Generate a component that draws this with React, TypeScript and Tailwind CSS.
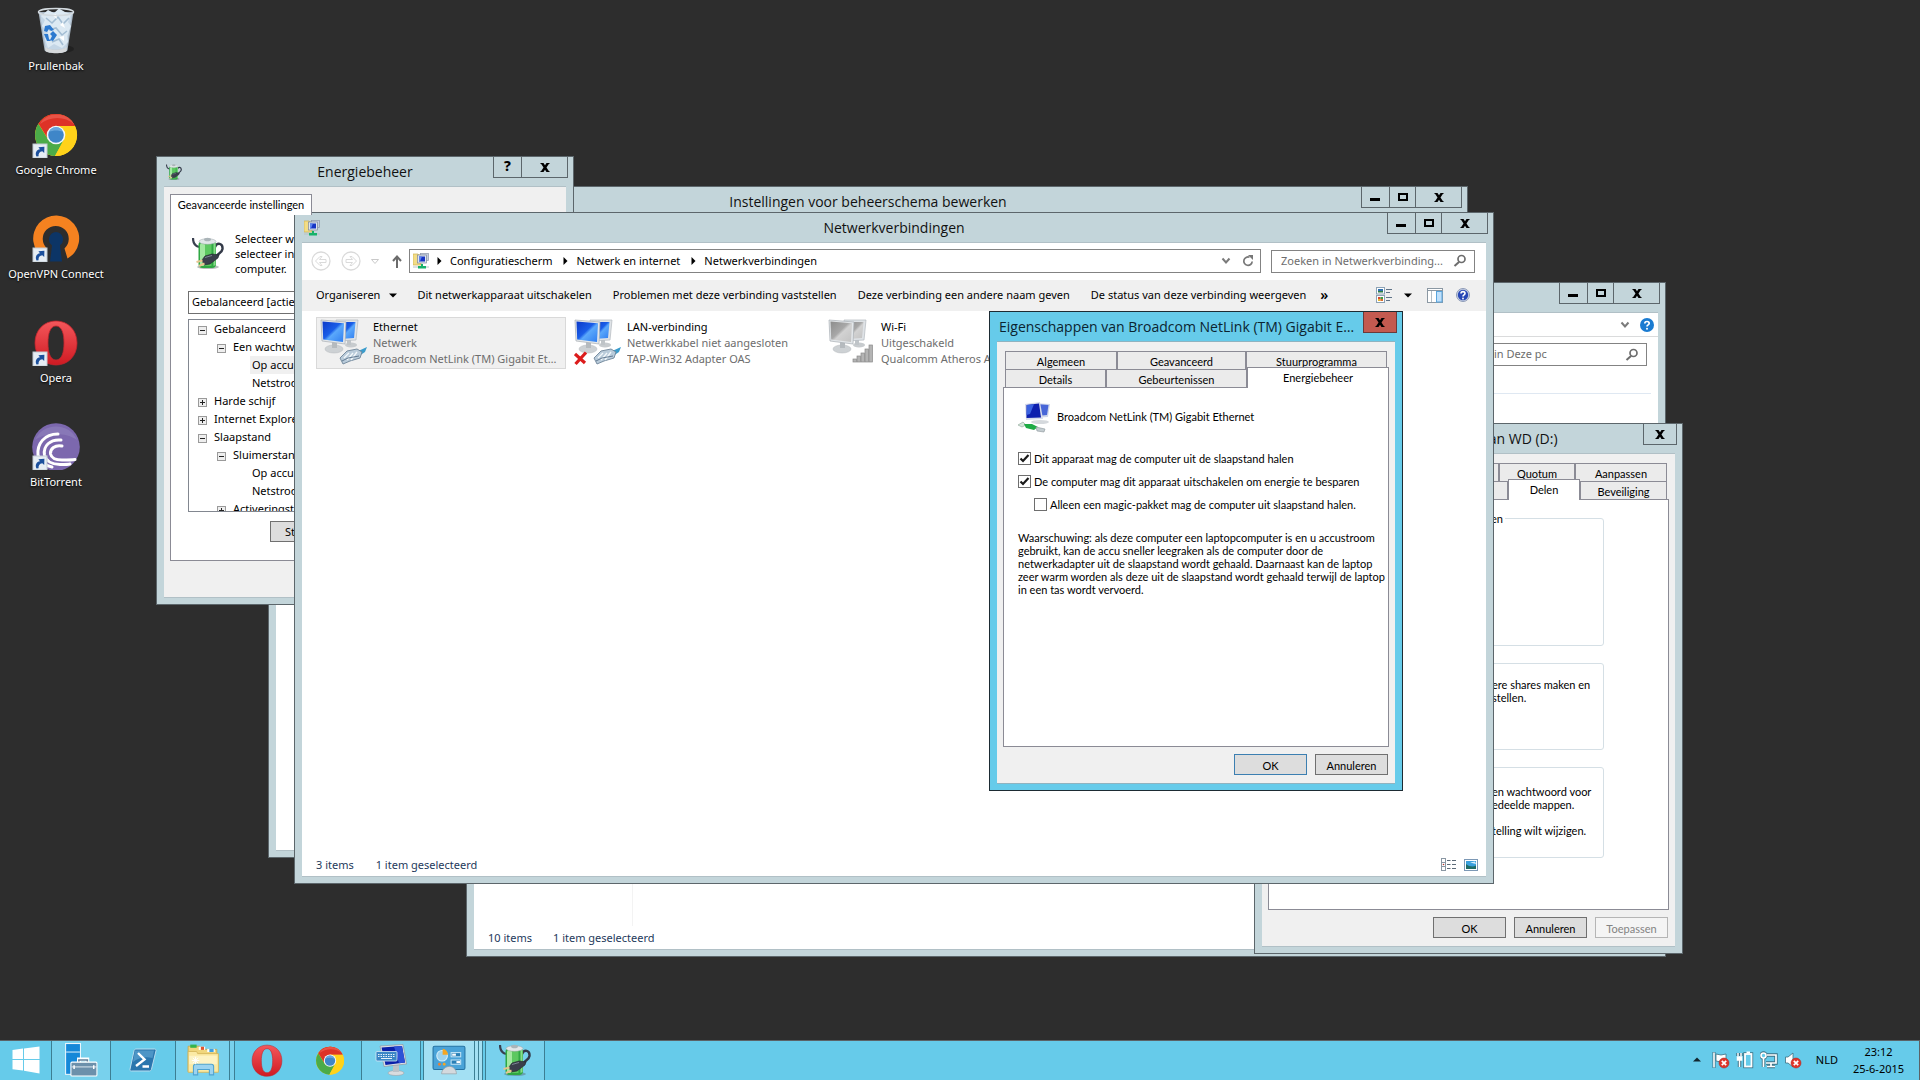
import React from "react";

const UI = "font-['Noto_Sans','Open_Sans',sans-serif]";
const TITLE = "font-['Open_Sans','Noto_Sans',sans-serif]";
const SANS = "font-['Lato','Liberation_Sans',sans-serif]";

/* ---------- icons ---------- */

function ShortcutMark() {
  return (
    <g>
      <rect x="1" y="34" width="14" height="14" fill="#e6edf4" stroke="#c3ccd4" strokeWidth="1" />
      <path d="M4.5 46.5C2.8 43 4.5 39.8 8 39.3L6.4 37.2L12.4 36.8L12.2 43L10.3 41.3C7.4 41.8 6.2 43.6 6.6 46.3Z" fill="#1b4f9c" />
    </g>
  );
}

function RecycleBin() {
  return (
    <svg width="48" height="48" viewBox="0 0 48 48" aria-hidden="true">
      <ellipse cx="30" cy="43" rx="12" ry="4" fill="#1d1d1d" opacity="0.7" />
      <path d="M6.500 6L12.500 44C13 48 35 48 35.500 44L41.500 6Z" fill="#a9b7c4" />
      <path d="M8 8L13.500 41.500C16 44.500 32 44.500 34.500 41.500L40 8Z" fill="#c4d6e6" />
      <path d="M9 10L16 4L22 7L27 2.500L33 6L39 8L36 16L39 20L35 30L36 36L30 42L22 38L16 42L13 33L16 26L10 20L13 14Z" fill="#dce9f3" />
      <path d="M14 12L20 17L26 11L31 18L37 12M17 24L24 22L30 29L35 25M20 36L27 33L31 39" fill="none" stroke="#a3bdd3" strokeWidth="1.600" />
      <path d="M20 9L25 13L24 8ZM28 19L33 22L31 16ZM27 31L32 35L32 30Z" fill="#fff" />
      <path d="M13 20L18 19L22 24L19 25L17 23L15 26L12 25ZM21 25L25 29L21 35L18 34L20 30L18 28ZM12 28L16 28L17 33L19 35L15 35Z" fill="#2c79cf" />
      <ellipse cx="24" cy="6" rx="17.500" ry="3.500" fill="none" stroke="#d3dadf" strokeWidth="1.500" />
      <path d="M13 41C18 44.500 30 44.500 35 41L34.500 45C32 48 16 48 13.500 45Z" fill="#d6d9db" />
    </svg>
  );
}

function ChromeArt() {
  return (
    <g>
      <circle cx="24" cy="25" r="21" fill="#ffd21a" />
      <path d="M24 25L6.500 13.500A21 21 0 0 1 43 15.900L24 15.900Z" fill="#dd3327" />
      <path d="M6.400 13.700A21 21 0 0 0 23 46L32 29.500L24 25L16.100 29.500Z" fill="#4bab48" />
      <path d="M24 15.900H43A21 21 0 0 1 23 46L32 29.500Z" fill="#ffd21a" />
      <path d="M6.500 13.700A21 21 0 0 1 43 15.900H24L15.500 28Z" fill="#dd3327" />
      <path d="M8 14C14 2 34 1 42 14C33 6 18 6 8 14Z" fill="#f0695b" opacity="0.600" />
      <circle cx="24" cy="25" r="9.300" fill="#f4f8fb" />
      <circle cx="24" cy="25" r="7.800" fill="#3f86c8" />
      <path d="M17 22A7.500 7.500 0 0 1 31 22C27 20 21 20 17 22Z" fill="#6aa6dc" />
    </g>
  );
}

function OperaArt({ size, mark }: { size: number; mark?: boolean }) {
  return (
    <svg width={size} height={size} viewBox="0 0 48 48" aria-hidden="true">
      <defs>
        <linearGradient id="operaRed" x1="0" y1="0" x2="0" y2="1">
          <stop offset="0" stopColor="#f4575b" />
          <stop offset="1" stopColor="#cf1a22" />
        </linearGradient>
      </defs>
      <path d="M24 3C36 3 45 12 45 25S36 47 24 47S3 38 3 25S12 3 24 3ZM24 8C18 8 16 16 16 25S18 42 24 42S32 34 32 25S30 8 24 8Z" fill="url(#operaRed)" fillRule="evenodd" stroke="#c0252c" strokeWidth="0.800" />
      {mark && <ShortcutMark />}
    </svg>
  );
}

function ChromeIcon({ size, mark }: { size: number; mark?: boolean }) {
  return (
    <svg width={size} height={size} viewBox="0 0 48 48" aria-hidden="true">
      <ChromeArt />
      {mark && <ShortcutMark />}
    </svg>
  );
}

function OpenVpnIcon() {
  return (
    <svg width="48" height="48" viewBox="0 0 48 48" aria-hidden="true">
      <path d="M12 44A23 23 0 1 1 35.500 44.500L32.500 34.500A13 13 0 1 0 15 34.500Z" fill="#f58220" />
      <path d="M24 18A7.500 7.500 0 0 1 28 31.500L30 47.500H18L20 31.500A7.500 7.500 0 0 1 24 18Z" fill="#0c3566" />
      <ShortcutMark />
    </svg>
  );
}

function BitTorrentIcon() {
  return (
    <svg width="48" height="48" viewBox="0 0 48 48" aria-hidden="true">
      <circle cx="24" cy="25" r="23.800" fill="#7c68ae" />
      <path d="M3 18A23 23 0 0 1 45 18C34 10 14 10 3 18Z" fill="#9183bd" opacity="0.600" />
      <g fill="none" stroke="#fff" strokeWidth="3" strokeLinecap="round">
        <path d="M26 12C12 12 5 22 6 33C8 40 14 44 20 45" />
        <path d="M29 18C18 17 11 24 12.500 33C14 39 20 42.500 28 42.500C32 42.500 36 42.500 38 42" />
        <path d="M30 24C23 22.500 18 27 18.500 32C19.500 36 24 38 30 38C36 38 40 38 43 37.500" />
      </g>
      <ShortcutMark />
    </svg>
  );
}

function PowerIcon({ size }: { size: number }) {
  return (
    <svg width={size} height={size} viewBox="0 0 32 32" aria-hidden="true">
      <ellipse cx="16" cy="30" rx="11" ry="2" fill="#4f5a5a" opacity="0.400" />
      <path d="M1 1C1 5 3 9 7 10" fill="none" stroke="#39404f" strokeWidth="2.200" />
      <path d="M23 10C25 5 31 6 30.500 12C30 16 26 16 24 20" fill="none" stroke="#333a48" strokeWidth="2.400" />
      <rect x="6.500" y="4" width="17.500" height="27" rx="4" fill="#2fa843" />
      <rect x="8" y="6" width="5" height="23" rx="2" fill="#a2e8a0" />
      <path d="M13 6H19.500V29H13Z" fill="#5cc860" />
      <path d="M21.500 6H23.500V28L21.500 29Z" fill="#8adb8a" />
      <ellipse cx="15.500" cy="4.500" rx="8.500" ry="2.800" fill="#e1e6e8" stroke="#9aa5a9" strokeWidth="0.500" />
      <ellipse cx="15.500" cy="2.500" rx="3.500" ry="1.800" fill="#aab4b8" />
      <path d="M10 23L13 19L20 17L27 18L26 21L18 27L12 28Z" fill="#3a3f4b" stroke="#20242d" strokeWidth="0.600" />
      <path d="M13 20.500L20 18.500" stroke="#7d8494" strokeWidth="1" />
      <path d="M4.500 25L10.500 23.500M7 29L12.500 26.500" stroke="#e6c48f" strokeWidth="2" />
    </svg>
  );
}

function NetFolderIcon() {
  return (
    <svg width="16" height="16" viewBox="0 0 16 16" aria-hidden="true">
      <path d="M0 1H5L6 2H8V12H0Z" fill="#f3dd86" stroke="#cdb252" strokeWidth="0.700" />
      <rect x="7.500" y="0.500" width="8" height="7" fill="#c6cfdd" stroke="#8e98aa" strokeWidth="0.700" />
      <rect x="4.500" y="2" width="9" height="8" fill="#dfe5ee" stroke="#7c879b" strokeWidth="0.700" />
      <rect x="6" y="3.500" width="6" height="5" fill="#1734c4" />
      <path d="M6 3.500H9L7 8.500H6Z" fill="#5d84ee" />
      <path d="M8 11H10V13H13V15.500H5V13H8Z" fill="#17b26a" />
      <path d="M0 14H5M13 14H16" stroke="#b8c2c5" />
    </svg>
  );
}

type MonitorKind = "cable" | "off" | "wifi";

function ConnectionIcon({ kind }: { kind: MonitorKind }) {
  const grey = kind === "wifi";
  const a = grey ? "#8c8c8c" : "#0c39c8";
  const b = grey ? "#d2d2d2" : "#5aa8fb";
  const id = "scr" + kind;
  return (
    <svg width="50" height="50" viewBox="0 0 50 50" aria-hidden="true">
      <defs>
        <linearGradient id={id} x1="0" y1="0" x2="1" y2="1">
          <stop offset="0" stopColor={a} />
          <stop offset="0.450" stopColor={grey ? "#a8a8a8" : "#1a5ee8"} />
          <stop offset="0.550" stopColor={b} />
          <stop offset="1" stopColor={grey ? "#c2c2c2" : "#2f7df0"} />
        </linearGradient>
      </defs>
      <ellipse cx="31" cy="27" rx="6" ry="2.500" fill="#c7cbce" />
      <path d="M27 20H31V27H27Z" fill="#bfc4c8" />
      <path d="M16 2L38 2L36 22L18 23Z" fill="#dfe3e7" stroke="#b3b9bf" strokeWidth="0.700" />
      <path d="M19 4L35.500 4L34 20L20 21Z" fill={`url(#${id})`} />
      <ellipse cx="14" cy="31" rx="9" ry="4" fill="#cdd1d4" stroke="#b2b7ba" strokeWidth="0.500" />
      <path d="M12 24H17V30H12Z" fill="#b5babe" />
      <path d="M1 2L26 4L25 26L2 23Z" fill="#e3e7ea" stroke="#a9afb5" strokeWidth="0.700" />
      <path d="M2.500 3.500L24 5.300L23 24L3.200 21.500Z" fill={`url(#${id})`} />
      {grey ? (
        <g fill="#b4b4b4" stroke="#8a8a8a" strokeWidth="0.700">
          <rect x="25" y="41" width="3.500" height="3" />
          <rect x="29" y="38" width="3.500" height="6" />
          <rect x="33" y="35" width="3.500" height="9" />
          <rect x="37" y="31" width="3.500" height="13" />
          <rect x="41" y="27" width="3.500" height="17" />
        </g>
      ) : (
        <g>
          <path d="M36 34L47 29L45 34L39 38Z" fill="#3a9ccc" />
          <path d="M20 40L27 33L37 31L42 34L40 40L30 43L23 46Z" fill="#b9cbda" stroke="#6e8498" strokeWidth="0.900" />
          <path d="M24 40L29 35M27 42L33 35M31 42L37 34" stroke="#f2f7fa" strokeWidth="1.400" />
          <path d="M22 43L28 40L39 38" stroke="#587089" fill="none" strokeWidth="0.900" />
        </g>
      )}
      {kind === "off" && <path d="M1 36L11 45M12 34.500L1.500 46" stroke="#dc1c1c" strokeWidth="3.200" />}
    </svg>
  );
}

function AdapterIcon() {
  return (
    <svg width="32" height="32" viewBox="0 0 32 32" aria-hidden="true">
      <path d="M15 1L32 2L30 15L16 16Z" fill="#cfd6ea" />
      <path d="M18 2L30.500 3L29 13L19 14Z" fill="#4866d8" />
      <path d="M7 2L22 0L25 17L8 18Z" fill="#d6dbea" />
      <path d="M8.500 3L21 1.500L23 15.500L8.500 16Z" fill="#0d1fae" />
      <path d="M9 3L16 2.200L12 12L8.500 13Z" fill="#3a62e0" />
      <ellipse cx="22" cy="20" rx="9" ry="2" fill="#d5d9dd" />
      <path d="M0 23L5 20L8 23L4 25Z" fill="#d4e6da" stroke="#8ba596" strokeWidth="0.600" />
      <path d="M6 22L14 22L20 25L16 28L8 26Z" fill="#1eab45" />
      <path d="M18 25L27 27L26 30L19 29Z" fill="#c3ccd0" stroke="#8b959a" strokeWidth="0.600" />
    </svg>
  );
}

function Magnifier() {
  return (
    <svg width="14" height="14" viewBox="0 0 14 14" fill="none" stroke="#6d6d6d" aria-hidden="true">
      <circle cx="8.500" cy="5" r="3.500" strokeWidth="1.700" />
      <path d="M6 8L1.500 12" strokeWidth="2" />
    </svg>
  );
}

function Chevron() {
  return (
    <svg width="10" height="8" viewBox="0 0 10 8" fill="none" stroke="#7b7b7b" strokeWidth="2" aria-hidden="true">
      <path d="M1.500 1.500L5 5.500L8.500 1.500" />
    </svg>
  );
}

function TriRight() {
  return (
    <svg width="5" height="8" viewBox="0 0 5 8" aria-hidden="true">
      <path d="M0.500 0L4.500 4L0.500 8Z" fill="#000" />
    </svg>
  );
}

function TriDown() {
  return (
    <svg width="8" height="5" viewBox="0 0 8 5" aria-hidden="true">
      <path d="M0 0.500H8L4 4.500Z" fill="#000" />
    </svg>
  );
}

function HistoryArrow({ back }: { back?: boolean }) {
  return (
    <svg width="20" height="20" viewBox="0 0 20 20" fill="none" stroke="#dadada" aria-hidden="true">
      <circle cx="10" cy="10" r="9" strokeWidth="1.300" />
      {back ? (
        <path d="M4.500 10L9 5.500H11L8.500 8.500H15V11.500H8.500L11 14.500H9Z" />
      ) : (
        <path d="M15.500 10L11 5.500H9L11.500 8.500H5V11.500H11.500L9 14.500H11Z" />
      )}
    </svg>
  );
}

/* ---------- window frame ---------- */

function CloseX() {
  return (
    <svg width="10" height="9" viewBox="0 0 10 9" aria-hidden="true">
      <path d="M0.500 0H3.500L5 2.300L6.500 0H9.500V1H8.800L6.500 4.500L8.800 8H9.500V9H6.500L5 6.700L3.500 9H0.500V8H1.200L3.500 4.500L1.200 1H0.500Z" fill="#000" />
    </svg>
  );
}

type Caption = "full" | "help" | "close";

function CaptionButtons({ kind, active }: { kind: Caption; active?: boolean }) {
  return (
    <div className={"flex h-[21px] shrink-0 self-start border-x border-b " + (active ? "border-[#6b3a3a]" : "border-[#5c666b]")}>
      {kind === "full" && (
        <>
          <button aria-label="Minimaliseren" className="flex w-[27px] items-end justify-center pr-px pb-[6px]">
            <svg width="10" height="3" aria-hidden="true"><rect width="10" height="3" fill="#000" /></svg>
          </button>
          <button aria-label="Maximaliseren" className="flex w-[27px] items-center justify-center border-x border-[#5c666b]">
            <svg width="10" height="8" aria-hidden="true"><rect x="1" y="1" width="8" height="6" fill="none" stroke="#000" strokeWidth="2" /></svg>
          </button>
        </>
      )}
      {kind === "help" && (
        <button aria-label="Help" className="w-[28px] border-r border-[#5c666b] pb-[2px] text-[14px] leading-[18px] font-extrabold">?</button>
      )}
      <button
        aria-label="Sluiten"
        className={"flex items-center justify-center " + (kind === "close" ? "w-[32px] " : "w-[45px] ") + (active ? "bg-[#c35a50]" : "")}
      >
        <CloseX />
      </button>
    </div>
  );
}

type WindowProps = {
  place: string;
  title: string;
  caption: Caption;
  icon?: React.ReactNode;
  active?: boolean;
  dialog?: boolean;
  children?: React.ReactNode;
};

function Window({ place, title, caption, icon, active, dialog, children }: WindowProps) {
  return (
    <section
      aria-label={title}
      className={"absolute flex flex-col border " + place + " " + (active ? "border-[#1d2b33] bg-[#66cbea]" : "border-[#5c666b] bg-[#c3d5da]")}
    >
      {active ? (
        <header className="flex h-[29px] shrink-0 items-center pr-[5px] pl-[9px]">
          <h2 className={"min-w-0 flex-1 truncate pr-1 text-[14px] leading-5 text-[#0b2430] " + TITLE}>{title}</h2>
          <CaptionButtons kind={caption} active />
        </header>
      ) : (
        <header className="grid h-[29px] shrink-0 grid-cols-[1fr_auto_1fr] items-center px-[5px]">
          <div className="pl-1">{icon}</div>
          <h2 className={"text-[14px] leading-5 whitespace-nowrap text-[#111] " + TITLE}>{title}</h2>
          <div className="flex justify-end self-start">
            <CaptionButtons kind={caption} />
          </div>
        </header>
      )}
      <div
        className={
          "mx-[7px] mb-[6px] flex min-h-0 flex-1 flex-col border-y " +
          (active ? "border-[#8fb3c0] " : "border-[#b1c0c6] ") +
          (dialog ? "bg-[#f0f0f0]" : "bg-white")
        }
      >
        {children}
      </div>
    </section>
  );
}

/* ---------- shared controls ---------- */

function PushButton({ children, look = "plain" }: { children: React.ReactNode; look?: "plain" | "default" | "disabled" }) {
  const tone =
    look === "default"
      ? "border-[#3c7fb1] bg-[#dddddd] text-black"
      : look === "disabled"
        ? "border-[#b5b5b5] bg-[#f4f4f4] text-[#838383]"
        : "border-[#707070] bg-[#dddddd] text-black";
  return (
    <button disabled={look === "disabled"} className={"h-[21px] w-[73px] border pt-px text-[11px] leading-[13px] " + SANS + " " + tone}>
      {children}
    </button>
  );
}

function Tab({ children, width, active }: { children?: React.ReactNode; width: string; active?: boolean }) {
  return (
    <button
      role="tab"
      aria-selected={!!active}
      className={
        "border-x border-t border-[#8b8b95] text-[11px] leading-[13px] whitespace-nowrap " + SANS + " " + width + " " +
        (active ? "relative z-10 -mt-[2px] -mb-px h-[21px] bg-white pb-[2px]" : "h-[18px] bg-[#ebebeb] pt-px")
      }
    >
      {children}
    </button>
  );
}

function Check({ label, checked, indent }: { label: string; checked?: boolean; indent?: boolean }) {
  return (
    <label className={"flex h-[13px] items-center gap-[3px] text-[11px] leading-[13px] whitespace-nowrap " + (indent ? "ml-4" : "")}>
      <span className="grid shrink-0">
        <input type="checkbox" defaultChecked={checked} className="col-start-1 row-start-1 size-[13px] appearance-none border border-[#6e6e6e] bg-white" />
        {checked && (
          <svg width="13" height="13" viewBox="0 0 13 13" className="pointer-events-none col-start-1 row-start-1" aria-hidden="true">
            <path d="M2.500 6.500L5 9L10.500 3" fill="none" stroke="#1a1a1a" strokeWidth="2.200" />
          </svg>
        )}
      </span>
      {label}
    </label>
  );
}

/* ---------- windows ---------- */

type TreeItem = { text: string; depth: 0 | 1 | 2; sign?: "+" | "-"; selected?: boolean };

const tree: TreeItem[] = [
  { text: "Gebalanceerd", depth: 0, sign: "-" },
  { text: "Een wachtwoord", depth: 1, sign: "-" },
  { text: "Op accu", depth: 2, selected: true },
  { text: "Netstroom", depth: 2 },
  { text: "Harde schijf", depth: 0, sign: "+" },
  { text: "Internet Explorer", depth: 0, sign: "+" },
  { text: "Slaapstand", depth: 0, sign: "-" },
  { text: "Sluimerstand", depth: 1, sign: "-" },
  { text: "Op accu", depth: 2 },
  { text: "Netstroom", depth: 2 },
  { text: "Activeringstimers", depth: 1, sign: "+" },
];

const depthPad = ["pl-[9px]", "pl-[28px]", "pl-[61px]"];

function PowerWindow() {
  return (
    <Window place="left-[156px] top-[156px] h-[449px] w-[418px]" title="Energiebeheer" caption="help" dialog icon={<PowerIcon size={16} />}>
      <div className="flex min-h-0 flex-1 flex-col px-[6px] pt-[7px] pb-[36px]">
        <div role="tablist" className="flex">
          <button role="tab" aria-selected="true" className={"relative z-10 -mb-px h-[21px] w-[142px] border-x border-t border-[#8b8b95] bg-white pb-px text-[11px] leading-[13px] " + SANS}>
            Geavanceerde instellingen
          </button>
        </div>
        <div className="flex min-h-0 flex-1 flex-col border border-[#8b8b95] bg-white px-[17px] pt-4 pb-[18px]">
          <div className="flex gap-[11px] pl-[4px]">
            <div className="mt-[6px]"><PowerIcon size={32} /></div>
            <p className="text-[11px] leading-[15px]">
              Selecteer welk schema u wilt<br />selecteer instellingen<br />computer.
            </p>
          </div>
          <select aria-label="Energieschema" className="mt-[15px] h-[23px] w-full shrink-0 appearance-none border border-[#707070] bg-white px-[3px] pb-px text-[11px] leading-5">
            <option>Gebalanceerd [actief]</option>
          </select>
          <ul className="mt-[5px] min-h-0 flex-1 overflow-hidden border border-[#828790]">
            {tree.map((item, i) => (
              <li key={i} className={"flex h-[18px] items-center gap-[7px] text-[11px] leading-[18px] whitespace-nowrap " + depthPad[item.depth]}>
                {item.sign && (
                  <svg width="9" height="9" viewBox="0 0 9 9" className="mt-[3px] shrink-0" aria-hidden="true">
                    <rect x="0.500" y="0.500" width="8" height="8" fill="#eee" stroke="#9a9a9a" />
                    <path d={item.sign === "+" ? "M2 4.500H7M4.500 2V7" : "M2 4.500H7"} stroke="#222" />
                  </svg>
                )}
                <span className={item.selected ? "bg-[#f0f0f0] pr-[2px] pl-[2px]" : item.depth === 2 ? "pl-[2px]" : ""}>{item.text}</span>
              </li>
            ))}
          </ul>
          <button className="mt-[9px] h-[21px] w-[272px] shrink-0 self-end border border-[#707070] bg-[#dddddd] pl-[14px] text-left text-[11px] leading-[18px]">
            Standaardinstellingen
          </button>
        </div>
      </div>
    </Window>
  );
}

const connections: { name: string; state: string; device: string; kind: MonitorKind; selected?: boolean }[] = [
  { name: "Ethernet", state: "Netwerk", device: "Broadcom NetLink (TM) Gigabit Ethernet", kind: "cable", selected: true },
  { name: "LAN-verbinding", state: "Netwerkkabel niet aangesloten", device: "TAP-Win32 Adapter OAS", kind: "off" },
  { name: "Wi-Fi", state: "Uitgeschakeld", device: "Qualcomm Atheros AR5B97", kind: "wifi" },
];

const crumbs = ["Configuratiescherm", "Netwerk en internet", "Netwerkverbindingen"];

const commands = [
  "Dit netwerkapparaat uitschakelen",
  "Problemen met deze verbinding vaststellen",
  "Deze verbinding een andere naam geven",
  "De status van deze verbinding weergeven",
];

function NetworkWindow() {
  return (
    <Window place="left-[294px] top-[212px] h-[672px] w-[1200px]" title="Netwerkverbindingen" caption="full" icon={<NetFolderIcon />}>
      <nav className="flex h-[37px] shrink-0 items-center pr-[11px] pb-px pl-[9px]">
        <button aria-label="Vorige"><HistoryArrow back /></button>
        <button aria-label="Volgende" className="ml-[10px]"><HistoryArrow /></button>
        <button aria-label="Recente locaties" className="ml-[10px]">
          <svg width="8" height="5" viewBox="0 0 8 5" aria-hidden="true"><path d="M0.500 0.500H7.500L4 4.500Z" fill="none" stroke="#c9c9c9" /></svg>
        </button>
        <button aria-label="Omhoog" className="ml-[13px]">
          <svg width="10" height="13" viewBox="0 0 10 13" fill="none" stroke="#6b6b6b" strokeWidth="2" aria-hidden="true"><path d="M5 13V2M1 6L5 1.500L9 6" /></svg>
        </button>
        <div className="ml-[7px] flex h-6 min-w-0 flex-1 items-center border border-[#838383] pr-[6px] pl-[3px]">
          <NetFolderIcon />
          <ol className="ml-[8px] flex items-center gap-[11px]">
            {crumbs.map((c) => (
              <li key={c} className="flex items-center gap-[8px]">
                <TriRight />
                <button className="pb-px text-[11px] leading-4">{c}</button>
              </li>
            ))}
          </ol>
          <span className="flex-1" />
          <button aria-label="Vorige locaties" className="mr-[11px]"><Chevron /></button>
          <button aria-label="Vernieuwen">
            <svg width="12" height="12" viewBox="0 0 12 12" fill="none" aria-hidden="true">
              <path d="M7.500 2.200A4.200 4.200 0 1 0 10.200 6.500" stroke="#777" strokeWidth="1.700" />
              <path d="M6 0H11V5Z" fill="#777" />
            </svg>
          </button>
        </div>
        <label className="ml-[10px] flex h-[23px] w-[204px] items-center border border-[#838383] pr-[7px] pl-[9px]">
          <input type="text" aria-label="Zoeken" placeholder="Zoeken in Netwerkverbinding..." className="min-w-0 flex-1 pb-px text-[11px] leading-4 outline-none placeholder:text-[#6d6d6d]" />
          <Magnifier />
        </label>
      </nav>
      <div role="toolbar" className="flex h-[31px] shrink-0 items-center bg-[#f0f0f0] pr-[16px] pb-px pl-[14px] text-[11px] leading-4 whitespace-nowrap">
        <button className="mr-[20px] flex items-center gap-[9px]">Organiseren <TriDown /></button>
        <div className="flex gap-[21px]">
          {commands.map((c) => (
            <button key={c}>{c}</button>
          ))}
        </div>
        <button aria-label="Meer opdrachten" className="ml-[14px] text-[14px] font-semibold">»</button>
        <span className="flex-1" />
        <button aria-label="Weergave wijzigen">
          <svg width="16" height="16" viewBox="0 0 16 16" aria-hidden="true">
            <rect x="0.500" y="0.500" width="8" height="6.500" fill="#fff" stroke="#8da2b5" />
            <rect x="2" y="2" width="5" height="3" fill="#2c6fae" />
            <rect x="2" y="4" width="5" height="1.500" fill="#2f7d46" />
            <rect x="0.500" y="8.500" width="8" height="7" fill="#fff" stroke="#8da2b5" />
            <path d="M2 10H4.500V12H2Z" fill="#d2462f" /><path d="M4.500 10H7V12H4.500Z" fill="#3d9b43" /><path d="M2 12H4.500V14H2Z" fill="#e7b62e" /><path d="M4.500 12H7V14H4.500Z" fill="#d86b2f" />
            <path d="M10 2.500H16M10 5.500H14M10 10.500H16M10 13.500H14" stroke="#5f7388" />
          </svg>
        </button>
        <button aria-label="Meer weergaven" className="ml-[12px]"><TriDown /></button>
        <button aria-label="Voorbeeldvenster" className="ml-[15px]">
          <svg width="16" height="15" viewBox="0 0 16 15" aria-hidden="true">
            <rect x="0.500" y="0.500" width="15" height="14" fill="#fff" stroke="#8b98a3" />
            <path d="M1 2.500H15" stroke="#8b98a3" />
            <path d="M4.500 3V14" stroke="#b4bec6" />
            <rect x="9.500" y="3.500" width="5.500" height="10.500" fill="#bfe0fb" stroke="#5aa5dd" />
          </svg>
        </button>
        <button aria-label="Help" className="ml-[13px]">
          <svg width="14" height="14" viewBox="0 0 14 14" aria-hidden="true">
            <circle cx="7" cy="7" r="6.500" fill="#c9d2e6" stroke="#8e9bb6" />
            <circle cx="7" cy="7" r="5.200" fill="#2747b5" />
            <path d="M5 5.500C5 3 9 3 9 5.500C9 7 7 6.700 7 8.500" fill="none" stroke="#fff" strokeWidth="1.600" />
            <circle cx="7" cy="10.500" r="0.900" fill="#fff" />
          </svg>
        </button>
      </div>
      <ul className="flex flex-1 items-start gap-1 pt-[6px] pl-[14px]">
        {connections.map((c) => (
          <li
            key={c.name}
            className={"flex h-[52px] w-[250px] shrink-0 border pr-[8px] pl-[3px] " + (c.selected ? "border-[#d9d9d9] bg-[#f0f0f0]" : "border-transparent")}
          >
            <ConnectionIcon kind={c.kind} />
            <div className="ml-[3px] min-w-0 flex-1 pt-px text-[11px] leading-4 text-[#6d6d6d]">
              <p className="text-black">{c.name}</p>
              <p className="whitespace-nowrap">{c.state}</p>
              <p className="truncate">{c.device}</p>
            </div>
          </li>
        ))}
      </ul>
      <footer className="flex h-[23px] shrink-0 items-center gap-[22px] pr-[8px] pl-[14px] text-[11px] leading-4 text-[#1e395b]">
        <span>3 items</span>
        <span>1 item geselecteerd</span>
        <span className="flex-1" />
        <div className="flex items-center gap-[8px]">
          <button aria-label="Details">
            <svg width="15" height="13" viewBox="0 0 15 13" aria-hidden="true">
              <rect x="0.500" y="0.500" width="4" height="12" fill="#fff" stroke="#8a97a3" />
              <path d="M0 4.500H5M0 8.500H5" stroke="#8a97a3" />
              <path d="M6 2.500H9.500M11 2.500H15M6 6.500H9.500M11 6.500H15M6 10.500H9.500M11 10.500H15" stroke="#5d6b78" />
              <circle cx="2.500" cy="6.500" r="0.800" fill="#b3392f" />
            </svg>
          </button>
          <button aria-label="Grote pictogrammen">
            <svg width="14" height="12" viewBox="0 0 14 12" aria-hidden="true">
              <rect x="0.500" y="0.500" width="13" height="11" fill="#fff" stroke="#7c98b5" />
              <rect x="2" y="2" width="10" height="8" fill="#3aa0dd" />
              <path d="M2 5C6 8 9 8 12 6.500V10H2Z" fill="#1e6c66" />
              <path d="M6 3.500L11 2.500L12 5Z" fill="#d6eefc" />
            </svg>
          </button>
        </div>
      </footer>
    </Window>
  );
}

function AdapterDialog() {
  return (
    <Window
      place="left-[989px] top-[311px] h-[480px] w-[414px]"
      title="Eigenschappen van Broadcom NetLink (TM) Gigabit Ethernet"
      caption="close"
      active
      dialog
    >
      <div className={"flex min-h-0 flex-1 flex-col px-[6px] pt-[9px] pb-[8px] text-[11px] leading-[13px] " + SANS}>
        <div role="tablist" className="flex flex-col">
          <div className="flex h-[18px] px-[2px]">
            <Tab width="w-[112px]">Algemeen</Tab>
            <Tab width="w-[129px]">Geavanceerd</Tab>
            <Tab width="flex-1">Stuurprogramma</Tab>
          </div>
          <div className="flex h-[18px] pl-[2px]">
            <Tab width="w-[101px]">Details</Tab>
            <Tab width="w-[141px]">Gebeurtenissen</Tab>
            <Tab width="flex-1" active>Energiebeheer</Tab>
          </div>
        </div>
        <div role="tabpanel" className="flex-1 border border-[#8b8b95] bg-white px-[14px] pt-[14px]">
          <div className="flex gap-[7px]">
            <AdapterIcon />
            <p className="pt-[8px]">Broadcom NetLink (TM) Gigabit Ethernet</p>
          </div>
          <div className="mt-[18px] flex flex-col gap-[10px]">
            <Check label="Dit apparaat mag de computer uit de slaapstand halen" checked />
            <Check label="De computer mag dit apparaat uitschakelen om energie te besparen" checked />
            <Check label="Alleen een magic-pakket mag de computer uit slaapstand halen." indent />
          </div>
          <p className="mt-5 whitespace-nowrap">
            Waarschuwing: als deze computer een laptopcomputer is en u accustroom<br />
            gebruikt, kan de accu sneller leegraken als de computer door de<br />
            netwerkadapter uit de slaapstand wordt gehaald. Daarnaast kan de laptop<br />
            zeer warm worden als deze uit de slaapstand wordt gehaald terwijl de laptop<br />
            in een tas wordt vervoerd.
          </p>
        </div>
        <div className="flex justify-end gap-[8px] pt-[7px] pr-px">
          <PushButton look="default">OK</PushButton>
          <PushButton>Annuleren</PushButton>
        </div>
      </div>
    </Window>
  );
}

function ComputerWindow() {
  return (
    <Window place="left-[466px] top-[282px] h-[675px] w-[1200px]" title="Deze pc" caption="full">
      <div className="flex h-[24px] shrink-0 items-center justify-end gap-[10px] border-b border-[#dadbdc] pr-[4px]">
        <button aria-label="Lint uitvouwen"><Chevron /></button>
        <button aria-label="Help">
          <svg width="14" height="14" viewBox="0 0 14 14" aria-hidden="true">
            <circle cx="7" cy="7" r="7" fill="#1a7bd1" />
            <path d="M4.800 5.500C4.800 2.800 9.200 2.800 9.200 5.500C9.200 7 7 6.800 7 8.500" fill="none" stroke="#fff" strokeWidth="1.700" />
            <circle cx="7" cy="10.800" r="1" fill="#fff" />
          </svg>
        </button>
      </div>
      <div className="flex shrink-0 justify-end pt-[6px] pr-[11px]">
        <label className="flex h-[23px] w-[204px] items-center border border-[#838383] pr-[7px] pl-[9px]">
          <input type="text" aria-label="Zoeken" placeholder="Zoeken in Deze pc" className="min-w-0 flex-1 pb-px text-[11px] leading-4 outline-none placeholder:text-[#6d6d6d]" />
          <Magnifier />
        </label>
      </div>
      <div className="flex flex-1 pt-[7px] pr-[7px]">
        <div className="w-[159px] border-r border-[#f3f3f3]" />
        <div className="flex-1 pt-[20px]"><hr className="border-[#dfe8f2]" /></div>
      </div>
      <footer className="flex h-[23px] shrink-0 items-center gap-[21px] pl-[14px] text-[11px] leading-4 text-[#1e395b]">
        <span>10 items</span>
        <span>1 item geselecteerd</span>
      </footer>
    </Window>
  );
}

function DriveDialog() {
  return (
    <Window place="left-[1254px] top-[423px] h-[531px] w-[429px]" title="Eigenschappen van WD (D:)" caption="close" dialog>
      <div className={"flex min-h-0 flex-1 flex-col px-[6px] pt-[9px] pb-[8px] text-[11px] leading-[13px] " + SANS}>
        <div role="tablist" className="flex flex-col">
          <div className="flex h-[18px] justify-end pr-[2px]">
            <Tab width="w-[110px]" />
            <Tab width="w-[76px]">Quotum</Tab>
            <Tab width="w-[92px]">Aanpassen</Tab>
          </div>
          <div className="flex h-[18px] justify-end pr-[2px]">
            <Tab width="w-[110px]" />
            <Tab width="w-[72px]" active>Delen</Tab>
            <Tab width="w-[87px]">Beveiliging</Tab>
          </div>
        </div>
        <div role="tabpanel" className="flex-1 border border-[#8b8b95] bg-white pt-[12px] pr-[64px] pl-[12px]">
          <fieldset className="h-[134px] rounded-[3px] border border-[#d5dfe5] pl-[207px]">
            <legend className="px-[2px]">en</legend>
          </fieldset>
          <fieldset className="mt-[17px] h-[87px] rounded-[3px] border border-[#d5dfe5] pt-[14px] pl-[210px] whitespace-nowrap">
            <p>ere shares maken en</p>
            <p>stellen.</p>
          </fieldset>
          <fieldset className="mt-[17px] h-[91px] rounded-[3px] border border-[#d5dfe5] pt-[17px] pl-[210px] whitespace-nowrap">
            <p>en wachtwoord voor</p>
            <p>edeelde mappen.</p>
            <p className="mt-[13px]">telling wilt wijzigen.</p>
          </fieldset>
        </div>
        <div className="flex justify-end gap-[8px] pt-[7px] pr-px">
          <PushButton>OK</PushButton>
          <PushButton>Annuleren</PushButton>
          <PushButton look="disabled">Toepassen</PushButton>
        </div>
      </div>
    </Window>
  );
}

/* ---------- desktop and taskbar ---------- */

const shortcuts = [
  { label: "Prullenbak", art: <RecycleBin /> },
  { label: "Google Chrome", art: <ChromeIcon size={48} mark /> },
  { label: "OpenVPN Connect", art: <OpenVpnIcon /> },
  { label: "Opera", art: <OperaArt size={48} mark /> },
  { label: "BitTorrent", art: <BitTorrentIcon /> },
];

function WindowsLogo() {
  return (
    <svg width="28" height="28" viewBox="0 0 28 28" fill="#fff" aria-hidden="true">
      <path d="M0.500 4L11 2.600V13H0.500ZM12 2.500L27.500 0.500V13H12ZM0.500 14H11V24.600L0.500 23.200ZM12 14H27.500V27.500L12 24.800Z" />
    </svg>
  );
}

function ServerManagerIcon() {
  return (
    <svg width="34" height="34" viewBox="0 0 32 32" aria-hidden="true">
      <rect x="1.500" y="0.500" width="14" height="29" fill="#1588d8" stroke="#e8f5fc" />
      <path d="M2 8.500H15" stroke="#d4ecfa" />
      <path d="M14 18V15.500H22V18" fill="none" stroke="#fff" strokeWidth="3.500" />
      <path d="M14 18V16H22V18" fill="none" stroke="#61809a" strokeWidth="1.500" />
      <rect x="6.500" y="18" width="24.500" height="13" rx="1" fill="#6c90ab" stroke="#fff" />
      <path d="M7 22.500H31" stroke="#d5e3ec" />
      <path d="M9.500 21V24.500M28 21V24.500" stroke="#fff" strokeWidth="1.400" />
    </svg>
  );
}

function PowerShellIcon() {
  return (
    <svg width="28" height="24" viewBox="0 0 28 24" aria-hidden="true">
      <path d="M7 1H25.500C26.600 1 27.200 1.800 27 2.800L22.500 21.200C22.200 22.300 21.400 23 20.400 23H2.300C1.200 23 0.700 22.200 1 21.200L5 2.800C5.200 1.700 6 1 7 1Z" fill="#2a76ae" stroke="#b8dcee" />
      <path d="M6 2.500H25L23.500 10C16 8 9 10 4 14Z" fill="#5da2d0" opacity="0.700" />
      <path d="M9 5L15.500 11.500L7 18M13.500 18.500H20" fill="none" stroke="#fff" strokeWidth="2.400" />
    </svg>
  );
}

function ExplorerIcon() {
  return (
    <svg width="34" height="34" viewBox="0 0 32 32" aria-hidden="true">
      <path d="M2 3H13L14 6H29V27H2Z" fill="#f0d67c" stroke="#c9a94a" strokeWidth="0.800" />
      <rect x="4" y="1.500" width="6" height="3" fill="#35b44a" />
      <rect x="12" y="3.500" width="6" height="3" fill="#fff" /><rect x="14" y="3.500" width="3" height="3" fill="#e0542e" />
      <rect x="20" y="5.500" width="7" height="3" fill="#fff" /><rect x="22" y="5.500" width="4" height="3" fill="#3f9fe0" />
      <path d="M2 8H10L11 10H30.500V27.500H2Z" fill="#fbeaa4" stroke="#d4b65a" strokeWidth="0.800" />
      <path d="M3 12H29V20H3Z" fill="#fdf3c4" />
      <path d="M7 30V22C7 20.500 8 20 9 20H24C25.500 20 26 21 26 22V30H22V25H11V30Z" fill="#9bd3f0" stroke="#4fa3d0" />
      <path d="M9 13V20M5.500 16.500H12.500M6.500 14L11.500 19M11.500 14L6.500 19" stroke="#fff" strokeWidth="0.900" />
    </svg>
  );
}

function KeyboardMonitorIcon() {
  return (
    <svg width="32" height="32" viewBox="0 0 32 32" aria-hidden="true">
      <ellipse cx="21" cy="29" rx="8" ry="2.500" fill="#d9dcdf" stroke="#9da3a8" strokeWidth="0.600" />
      <path d="M18 20H24V28H18Z" fill="#bcc2c7" />
      <path d="M5 2L28 0.500L31.500 20L9 22.500Z" fill="#dde1e6" stroke="#8f97a0" strokeWidth="0.700" />
      <path d="M6.500 3.500L27 2L30 18.500L10.500 21Z" fill="#0a1fa8" />
      <path d="M19 2.600L27 2L30 18.500L24 19.300Z" fill="#2d52d6" />
      <rect x="1" y="7.500" width="21" height="9.500" rx="1" fill="#3b86c6" stroke="#d7e9f5" strokeWidth="0.800" />
      <path d="M3 10.500H20M3 12.500H20" stroke="#e6f2fa" strokeDasharray="1.500 1" />
      <path d="M6 14.500H17" stroke="#e6f2fa" />
    </svg>
  );
}

function ControlPanelIcon() {
  return (
    <svg width="34" height="32" viewBox="0 0 32 30" aria-hidden="true">
      <rect x="1" y="2" width="30" height="22" rx="1.500" fill="#4aa3d8" stroke="#2673a3" />
      <circle cx="9.500" cy="11" r="5" fill="#9cd2ef" stroke="#d6effb" />
      <path d="M10 10V4.500A5.500 5.500 0 0 1 15 10Z" fill="#f6a623" />
      <rect x="18" y="8" width="9" height="4" fill="#2a7fb6" stroke="#bfe3f6" /><rect x="18" y="15" width="9" height="4" fill="#2a7fb6" stroke="#bfe3f6" />
      <rect x="19" y="9" width="3.500" height="2" fill="#fff" /><rect x="23" y="16" width="3.500" height="2" fill="#fff" />
      <circle cx="7" cy="19" r="1.300" fill="#f07f2e" /><circle cx="11.500" cy="19" r="1.300" fill="#f6a623" />
      <path d="M9 28C9 24 13 21 16.500 21S23 24 23 28Z" fill="#d4d9dd" stroke="#9ba3a8" strokeWidth="0.700" />
    </svg>
  );
}

function RedX() {
  return (
    <g>
      <circle cx="12" cy="12" r="5" fill="#e0352b" stroke="#a82019" strokeWidth="0.500" />
      <path d="M9.800 9.800L14.200 14.200M14.200 9.800L9.800 14.200" stroke="#fff" strokeWidth="1.700" />
    </g>
  );
}

const tray = [
  { label: "Onderhoudscentrum", art: <><path d="M2 1V17" stroke="#3b6f82" strokeWidth="3" /><path d="M2 1.500V16.500" stroke="#fff" strokeWidth="1.600" /><path d="M4 3L9 4L14 3V10L9 11L4 10Z" fill="#fff" stroke="#3b6f82" strokeWidth="0.800" /><RedX /></> },
  { label: "Batterij", art: <><g stroke="#3b6f82" strokeWidth="3.400"><rect x="9" y="3" width="6.500" height="12.500" /><path d="M2 2V5M5 2V5M3.500 9V16" /></g><rect x="9" y="3" width="6.500" height="12.500" fill="#66cbea" stroke="#fff" strokeWidth="1.800" /><path d="M10.500 1.500H14" stroke="#fff" strokeWidth="2" /><path d="M2 2V5M5 2V5M1.500 6H5.500V9H1.500ZM3.500 9V16" fill="#fff" stroke="#fff" strokeWidth="1.500" /></> },
  { label: "Netwerk", art: <><g stroke="#3b6f82" strokeWidth="3.400"><path d="M7 4H16V12H6" /><path d="M11 12V15M7 15.500H15" /><circle cx="3.500" cy="4.500" r="2.500" /><path d="M3.500 7V16" /></g><path d="M7 4H16V12H6" stroke="#fff" strokeWidth="1.700" /><path d="M11 12V15M7 15.500H15" stroke="#fff" strokeWidth="1.700" /><circle cx="3.500" cy="4.500" r="2.500" fill="#66cbea" stroke="#fff" strokeWidth="1.600" /><path d="M3.500 7V16" stroke="#fff" strokeWidth="1.700" /></> },
  { label: "Volume", art: <><path d="M1.500 6H4L9 2V16L4 12H1.500Z" fill="#fff" stroke="#3b6f82" strokeWidth="0.800" /><RedX /></> },
];

function TaskButton({ label, look, children }: { label: string; look: string; children: React.ReactNode }) {
  return (
    <button aria-label={label} className={"flex h-full shrink-0 items-center justify-center pb-px " + look}>
      {children}
    </button>
  );
}

function Taskbar() {
  return (
    <div className="absolute inset-x-0 bottom-0 flex h-10 items-stretch border-t border-r border-[#5b6367] bg-[#66cbea]">
      <TaskButton label="Start" look="w-[51px]"><WindowsLogo /></TaskButton>
      <TaskButton label="Serverbeheer" look="w-[60px] border-x border-[#3c7e93] bg-[#78d1ed]"><ServerManagerIcon /></TaskButton>
      <TaskButton label="PowerShell" look="w-[64px]"><PowerShellIcon /></TaskButton>
      <TaskButton label="Verkenner" look="w-[55px] border-x border-[#3c7e93] bg-[#78d1ed]"><ExplorerIcon /></TaskButton>
      <span className="w-[5px] border-r border-[#3c7e93] bg-[#78d1ed]" />
      <TaskButton label="Opera" look="w-[64px]"><OperaArt size={34} /></TaskButton>
      <TaskButton label="Google Chrome" look="w-[62px]"><ChromeIcon size={32} /></TaskButton>
      <TaskButton label="Netwerkadapter" look="w-[60px] border-x border-[#3c7e93] bg-[#78d1ed]"><KeyboardMonitorIcon /></TaskButton>
      <TaskButton label="Configuratiescherm" look="ml-[2px] w-[52px] border-x border-[#3c7e93] bg-[#a3e0f3]"><ControlPanelIcon /></TaskButton>
      <span className="w-[4px] border-r border-[#3c7e93] bg-[#a3e0f3]" />
      <span className="w-[4px] border-r border-[#3c7e93] bg-[#a3e0f3]" />
      <TaskButton label="Energiebeheer" look="ml-[2px] w-[60px] border-x border-[#3c7e93] bg-[#78d1ed]"><PowerIcon size={32} /></TaskButton>
      <span className="flex-1" />
      <div className="flex items-center gap-[6px] pb-[2px]">
        <button aria-label="Verborgen pictogrammen" className="mr-[5px]">
          <svg width="8" height="5" viewBox="0 0 8 5" aria-hidden="true"><path d="M0 4.500L4 0.500L8 4.500Z" fill="#12262e" /></svg>
        </button>
        {tray.map((t) => (
          <button key={t.label} aria-label={t.label}>
            <svg width="18" height="18" viewBox="0 0 18 18" fill="none" aria-hidden="true">{t.art}</svg>
          </button>
        ))}
        <button className="ml-[8px] text-[11px] leading-4">NLD</button>
      </div>
      <div className="w-[81px] pt-[2px] text-center text-[11px] leading-[17px]">
        <p>23:12</p>
        <p>25-6-2015</p>
      </div>
    </div>
  );
}

export default function App() {
  return (
    <main className={"relative h-screen w-full overflow-hidden bg-[#2d2d2d] text-black " + UI}>
      <nav aria-label="Bureaublad" className="flex w-[112px] flex-col pt-[6px]">
        {shortcuts.map((s) => (
          <button key={s.label} className="flex h-[104px] flex-col items-center gap-[4px] text-[11px] leading-4 whitespace-nowrap text-white [text-shadow:0_1px_2px_#000]">
            {s.art}
            {s.label}
          </button>
        ))}
      </nav>
      <ComputerWindow />
      <DriveDialog />
      <Window place="left-[268px] top-[186px] h-[672px] w-[1200px]" title="Instellingen voor beheerschema bewerken" caption="full" />
      <PowerWindow />
      <NetworkWindow />
      <AdapterDialog />
      <Taskbar />
    </main>
  );
}
